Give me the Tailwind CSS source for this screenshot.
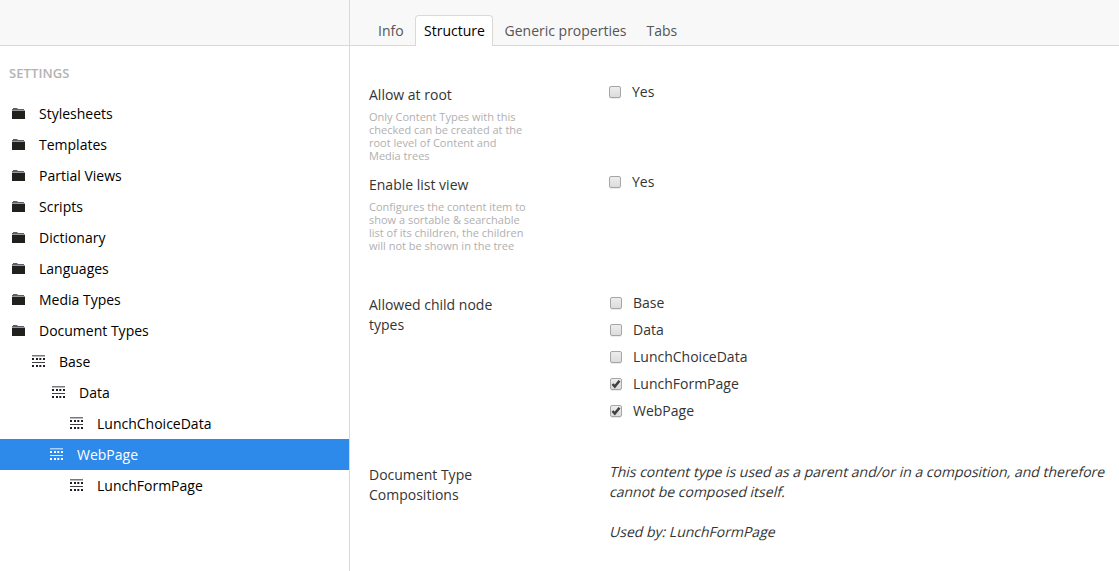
<!DOCTYPE html>
<html lang="en">
<head>
<meta charset="utf-8">
<title>Settings</title>
<script src="https://cdn.jsdelivr.net/npm/@tailwindcss/browser@4"></script>
</head>
<body class="flex h-[571px] w-[1119px] overflow-hidden bg-white font-['Open_Sans','Noto_Sans',sans-serif] text-[14px] leading-5 text-[#343434]">
<svg class="hidden">
  <symbol id="folder" viewBox="0 0 13 12"><path d="M1 0h4.500v1H12v1H0V1h1z" fill="#5c5f6c"/><path d="M0 2h13v1H0z" fill="#21201c" opacity=".45"/><path d="M0 3h13v8H0z" fill="#21201c"/></symbol>
  <symbol id="doc" viewBox="0 0 13 12"><path d="M0 0h13v1H0z" opacity=".6"/><path d="M0 1h13v1H0z" opacity=".3"/><path d="M0 7h13v1H0z" opacity=".85"/><path d="M0 3h2v2H0zM4 3h2v2H4zM7.300 3h2v2h-2zM11 3h2v2h-2zM0 10h2v2H0zM4 10h2v2H4zM7.300 10h2v2h-2zM11 10h2v2h-2z"/></symbol>
  <symbol id="check" viewBox="0 0 10 10"><path d="M1.500 5l2.300 2.600L8.500 1.700" fill="none" stroke="#404040" stroke-width="2.500"/></symbol>
</svg>

<aside class="flex w-[350px] shrink-0 flex-col border-r border-[#d9d9d9] text-black">
  <div class="h-[46px] shrink-0 border-b border-[#d9d9d9] bg-[#f8f8f8]"></div>
  <h5 class="mt-[17px] mb-[15px] pl-[9px] text-[13px] font-semibold tracking-[0.1px] text-[#b3b3b3]">SETTINGS</h5>
  <ul>
    <li class="flex h-[31px] items-center gap-[14px] pl-3"><svg class="mt-px h-3 w-[13px]"><use href="#folder"/></svg>Stylesheets</li>
    <li class="flex h-[31px] items-center gap-[14px] pl-3"><svg class="mt-px h-3 w-[13px]"><use href="#folder"/></svg>Templates</li>
    <li class="flex h-[31px] items-center gap-[14px] pl-3"><svg class="mt-px h-3 w-[13px]"><use href="#folder"/></svg>Partial Views</li>
    <li class="flex h-[31px] items-center gap-[14px] pl-3"><svg class="mt-px h-3 w-[13px]"><use href="#folder"/></svg>Scripts</li>
    <li class="flex h-[31px] items-center gap-[14px] pl-3"><svg class="mt-px h-3 w-[13px]"><use href="#folder"/></svg>Dictionary</li>
    <li class="flex h-[31px] items-center gap-[14px] pl-3"><svg class="mt-px h-3 w-[13px]"><use href="#folder"/></svg>Languages</li>
    <li class="flex h-[31px] items-center gap-[14px] pl-3"><svg class="mt-px h-3 w-[13px]"><use href="#folder"/></svg>Media Types</li>
    <li class="flex h-[31px] items-center gap-[14px] pl-3"><svg class="mt-px h-3 w-[13px]"><use href="#folder"/></svg>Document Types</li>
    <li class="flex h-[31px] items-center gap-[14px] pl-8"><svg class="mb-px h-3 w-[13px] fill-[#201c24]"><use href="#doc"/></svg>Base</li>
    <li class="flex h-[31px] items-center gap-[14px] pl-[52px]"><svg class="mb-px h-3 w-[13px] fill-[#201c24]"><use href="#doc"/></svg>Data</li>
    <li class="flex h-[31px] items-center gap-[14px] pl-[70px]"><svg class="mb-px h-3 w-[13px] fill-[#201c24]"><use href="#doc"/></svg>LunchChoiceData</li>
    <li class="flex h-[31px] items-center gap-[14px] bg-[#2e8aea] pl-[50px] text-white"><svg class="mb-px h-3 w-[13px] fill-white"><use href="#doc"/></svg>WebPage</li>
    <li class="flex h-[31px] items-center gap-[14px] pl-[70px]"><svg class="mb-px h-3 w-[13px] fill-[#201c24]"><use href="#doc"/></svg>LunchFormPage</li>
  </ul>
</aside>

<main class="min-w-0 flex-1">
  <nav class="flex h-[46px] items-end border-b border-[#d9d9d9] bg-[#f8f8f8] pl-5 text-[#555]">
    <a class="w-[45px] pb-1 pl-2">Info</a>
    <a class="-mb-px h-[31px] w-[78px] rounded-t border border-b-0 border-[#d9d9d9] bg-white pt-[5px] pl-2 text-black">Structure</a>
    <a class="w-[142px] pb-1 pl-[11.5px]">Generic properties</a>
    <a class="pb-1 pl-[11.5px]">Tabs</a>
  </nav>

  <div class="pl-[19px]">
    <section class="flex h-[90px] pt-[39px]">
      <div class="w-[240px] shrink-0">
        <div>Allow at root</div>
        <p class="mt-[5px] text-[11px] leading-[13px] text-[#b0b0b0]">Only Content Types with this<br>checked can be created at the<br>root level of Content and<br>Media trees</p>
      </div>
      <label class="-mt-[3px] flex h-5 items-center gap-[11px]"><span class="h-3 w-3 rounded-[2px] border border-[#a6a6a6] bg-linear-to-b from-[#ededed] to-[#dcdcdc] shadow-[0_1px_0_#ececec]"></span>Yes</label>
    </section>
    <section class="flex h-[120px] pt-[39px]">
      <div class="w-[240px] shrink-0">
        <div>Enable list view</div>
        <p class="mt-[5px] text-[11px] leading-[13px] text-[#b0b0b0]">Configures the content item to<br>show a sortable &amp; searchable<br>list of its children, the children<br>will not be shown in the tree</p>
      </div>
      <label class="-mt-[3px] flex h-5 items-center gap-[11px]"><span class="h-3 w-3 rounded-[2px] border border-[#a6a6a6] bg-linear-to-b from-[#ededed] to-[#dcdcdc] shadow-[0_1px_0_#ececec]"></span>Yes</label>
    </section>
    <section class="flex h-[170px] pt-[39px]">
      <div class="w-[241px] shrink-0">Allowed child node<br>types</div>
      <div class="-mt-[2px] flex flex-col gap-[7px]">
        <label class="flex h-5 items-center gap-[11px]"><span class="h-3 w-3 rounded-[2px] border border-[#a6a6a6] bg-linear-to-b from-[#ededed] to-[#dcdcdc] shadow-[0_1px_0_#ececec]"></span>Base</label>
        <label class="flex h-5 items-center gap-[11px]"><span class="h-3 w-3 rounded-[2px] border border-[#a6a6a6] bg-linear-to-b from-[#ededed] to-[#dcdcdc] shadow-[0_1px_0_#ececec]"></span>Data</label>
        <label class="flex h-5 items-center gap-[11px]"><span class="h-3 w-3 rounded-[2px] border border-[#a6a6a6] bg-linear-to-b from-[#ededed] to-[#dcdcdc] shadow-[0_1px_0_#ececec]"></span>LunchChoiceData</label>
        <label class="flex h-5 items-center gap-[11px]"><span class="h-3 w-3 rounded-[2px] border border-[#a6a6a6] bg-linear-to-b from-[#ededed] to-[#dcdcdc] shadow-[0_1px_0_#ececec]"><svg class="h-[10px] w-[10px]"><use href="#check"/></svg></span>LunchFormPage</label>
        <label class="flex h-5 items-center gap-[11px]"><span class="h-3 w-3 rounded-[2px] border border-[#a6a6a6] bg-linear-to-b from-[#ededed] to-[#dcdcdc] shadow-[0_1px_0_#ececec]"><svg class="h-[10px] w-[10px]"><use href="#check"/></svg></span>WebPage</label>
      </div>
    </section>
    <section class="flex pt-[39px]">
      <div class="w-[240px] shrink-0">Document Type<br>Compositions</div>
      <div class="-mt-[3px] flex flex-col whitespace-nowrap">
        <p class="origin-[0_15px] -skew-x-[14deg]">This content type is used as a parent and/or in a composition, and therefore</p>
        <p class="origin-[0_15px] -skew-x-[14deg]">cannot be composed itself.</p>
        <p class="mt-5 origin-[0_15px] -skew-x-[14deg]">Used by: LunchFormPage</p>
      </div>
    </section>
  </div>
</main>
</body>
</html>
